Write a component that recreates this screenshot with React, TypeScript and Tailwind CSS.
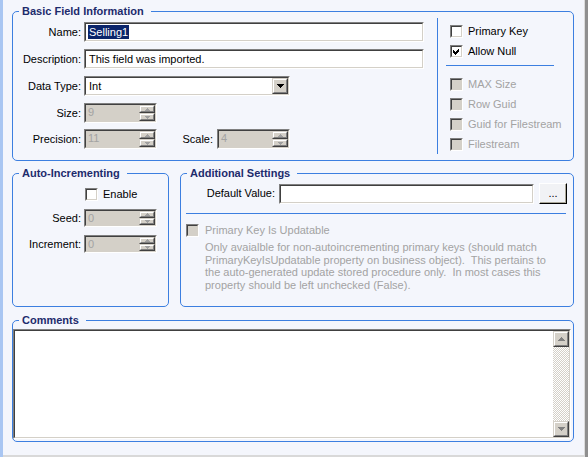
import React from "react";

const blue = "border-[#3c7fe0]";

function Group({
  title,
  className = "",
  children,
}: {
  title: string;
  className?: string;
  children: React.ReactNode;
}) {
  return (
    <fieldset className={`rounded-[5px] border ${blue} ${className}`}>
      <legend className="ml-[6px] pl-[3px] pr-[7px] font-bold leading-[13px] text-[#1d2b6c]">
        {title}
      </legend>
      {children}
    </fieldset>
  );
}

// classic 3D sunken frame: two nested 1px borders
function Sunken({
  className = "",
  fill = "bg-white",
  children,
}: {
  className?: string;
  fill?: string;
  children?: React.ReactNode;
}) {
  return (
    <div
      className={`border border-t-[#808080] border-l-[#808080] border-b-white border-r-white ${className}`}
    >
      <div
        className={`flex h-full w-full border border-t-[#404040] border-l-[#404040] border-b-[#d4d0c8] border-r-[#d4d0c8] ${fill}`}
      >
        {children}
      </div>
    </div>
  );
}

function Raised({ className = "", children }: { className?: string; children?: React.ReactNode }) {
  return (
    <div
      className={`border border-t-[#d4d0c8] border-l-[#d4d0c8] border-b-[#404040] border-r-[#404040] ${className}`}
    >
      <div className="flex h-full w-full items-center justify-center border border-t-white border-l-white border-b-[#808080] border-r-[#808080] bg-[#d4d0c8]">
        {children}
      </div>
    </div>
  );
}

function Arrow({ up = false, color = "#808080", w = 5 }: { up?: boolean; color?: string; w?: number }) {
  const h = Math.ceil(w / 2);
  const pts = up ? `0,${h} ${w},${h} ${w / 2},0` : `0,0 ${w},0 ${w / 2},${h}`;
  return (
    <svg width={w} height={h} viewBox={`0 0 ${w} ${h}`} shapeRendering="crispEdges">
      <polygon points={pts} fill={color} />
    </svg>
  );
}

function Spin({ value, className = "h-[20px]" }: { value: string; className?: string }) {
  return (
    <Sunken className={`w-[73px] ${className}`} fill="bg-[#d4d0c8]">
      <div className="flex-1 pl-[2px] leading-[14px] text-[#a3a3a3]">{value}</div>
      <div className="flex w-[16px] flex-col">
        <Raised className="flex-1">
          <Arrow up color="#a0a0a0" />
        </Raised>
        <Raised className="flex-1">
          <Arrow color="#a0a0a0" />
        </Raised>
      </div>
    </Sunken>
  );
}

function Check({
  checked = false,
  disabled = false,
  label,
  className = "",
}: {
  checked?: boolean;
  disabled?: boolean;
  label: string;
  className?: string;
}) {
  return (
    <div className={`flex h-[13px] items-center gap-[5px] ${className}`}>
      <Sunken className="h-[13px] w-[13px] shrink-0" fill={disabled ? "bg-[#d4d0c8]" : "bg-white"}>
        {checked && (
          <svg width="9" height="9" viewBox="0 0 9 9" shapeRendering="crispEdges">
            <polygon points="1,3 3,5 7,1 7,4 3,8 1,6" fill="#000" />
          </svg>
        )}
      </Sunken>
      <span className={`whitespace-nowrap leading-[13px] ${disabled ? "text-[#a3a3a3]" : "text-black"}`}>
        {label}
      </span>
    </div>
  );
}

function Label({ children, className = "w-[68px]" }: { children: React.ReactNode; className?: string }) {
  return <span className={`shrink-0 text-right leading-[13px] ${className}`}>{children}</span>;
}

export default function App() {
  return (
    <div className="flex h-[457px] w-[588px] overflow-hidden bg-[#f4f6fc] font-['Liberation_Sans',Arial,sans-serif] text-[11px] text-black">
      <div className="w-[3px] shrink-0 bg-[#a9c6f2]" />

      <div className="flex flex-1 flex-col">
        <div className="flex h-[455px] flex-col pl-[9px] pr-[10px] pt-[5px]">
          <Group title="Basic Field Information" className="h-[156px]">
            <div className="flex">
              <div className="flex w-[424px] flex-col pt-[4px]">
                <div className="flex h-[20px] items-center">
                  <Label>Name:</Label>
                  <Sunken className="ml-[3px] h-[20px] w-[340px]">
                    <span className="ml-[2px] mt-[1px] h-[14px] bg-[#0a246a] px-[1px] leading-[14px] text-white">
                      Selling1
                    </span>
                  </Sunken>
                </div>
                <div className="mt-[7px] flex h-[20px] items-center">
                  <Label>Description:</Label>
                  <Sunken className="ml-[3px] h-[20px] w-[340px]">
                    <span className="ml-[3px] mt-[1px] leading-[14px]">This field was imported.</span>
                  </Sunken>
                </div>
                <div className="mt-[7px] flex h-[20px] items-center">
                  <Label>Data Type:</Label>
                  <Sunken className="ml-[3px] h-[20px] w-[206px]">
                    <span className="ml-[3px] mt-[1px] flex-1 leading-[14px]">Int</span>
                    <Raised className="h-[16px] w-[16px]">
                      <Arrow w={7} color="#000" />
                    </Raised>
                  </Sunken>
                </div>
                <div className="mt-[7px] flex h-[20px] items-center">
                  <Label className="w-[68px] text-[#000]">Size:</Label>
                  <div className="ml-[3px]">
                    <Spin value="9" />
                  </div>
                </div>
                <div className="mt-[6px] flex h-[20px] items-center">
                  <Label>Precision:</Label>
                  <div className="ml-[3px]">
                    <Spin value="11" />
                  </div>
                  <Label className="w-[56px]">Scale:</Label>
                  <div className="ml-[4px]">
                    <Spin value="4" />
                  </div>
                </div>
              </div>

              <div className={`flex h-[136px] flex-1 flex-col border-l ${blue} pl-[12px] pt-[7px]`}>
                <Check label="Primary Key" />
                <Check label="Allow Null" checked className="mt-[7px]" />
                <div className="-ml-[4px] mt-[7px] h-px w-[108px] bg-[#3c7fe0]" />
                <Check label="MAX Size" disabled className="mt-[12px]" />
                <Check label="Row Guid" disabled className="mt-[7px]" />
                <Check label="Guid for Filestream" disabled className="mt-[7px]" />
                <Check label="Filestream" disabled className="mt-[7px]" />
              </div>
            </div>
          </Group>

          <div className="mt-[6px] flex h-[140px] gap-[11px]">
            <Group title="Auto-Incrementing" className="h-[140px] w-[157px]">
              <div className="flex flex-col pt-[8px]">
                <Check label="Enable" className="ml-[72px] gap-[4px]" />
                <div className="mt-[8px] flex h-[18px] items-center">
                  <Label>Seed:</Label>
                  <div className="ml-[3px]">
                    <Spin value="0" className="h-[18px]" />
                  </div>
                </div>
                <div className="mt-[8px] flex h-[18px] items-center">
                  <Label>Increment:</Label>
                  <div className="ml-[3px]">
                    <Spin value="0" className="h-[18px]" />
                  </div>
                </div>
              </div>
            </Group>

            <Group title="Additional Settings" className="h-[140px] flex-1">
              <div className="flex flex-col pt-[3px]">
                <div className="flex h-[21px] items-center">
                  <Label className="w-[94px]">Default Value:</Label>
                  <Sunken className="ml-[4px] h-[20px] w-[255px]" />
                  <button className="ml-[5px] flex h-[21px] w-[28px] items-center justify-center border border-t-white border-l-white border-b-black border-r-black bg-[#f1f2f5] shadow-[inset_-1px_-1px_0_#aca899] leading-[13px]">
                    ...
                  </button>
                </div>
                <div className="ml-[5px] mt-[9px] h-px w-[380px] bg-[#3c7fe0]" />
                <Check
                  label="Primary Key Is Updatable"
                  disabled
                  className="ml-[5px] mt-[10px] gap-[6px]"
                />
                <p className="ml-[24px] mt-[4px] whitespace-pre leading-[12.6px] text-[#a3a3a3]">
                  {"Only avaialble for non-autoincrementing primary keys (should match\n" +
                    "PrimaryKeyIsUpdatable property on business object).  This pertains to\n" +
                    "the auto-generated update stored procedure only.  In most cases this\n" +
                    "property should be left unchecked (False)."}
                </p>
              </div>
            </Group>
          </div>

          <Group title="Comments" className="mt-[7px] h-[128px]">
            <div className="pr-[2px] pt-[2px]">
              <Sunken className="h-[110px] w-[558px]">
                <div className="flex-1" />
                <div className="flex w-[16px] flex-col bg-[repeating-conic-gradient(#d4d0c8_0_25%,#ffffff_0_50%)] bg-[length:2px_2px]">
                  <Raised className="h-[16px] w-[16px]">
                    <Arrow up w={7} />
                  </Raised>
                  <div className="flex-1" />
                  <Raised className="h-[16px] w-[16px]">
                    <Arrow w={7} />
                  </Raised>
                </div>
              </Sunken>
            </div>
          </Group>
        </div>
        <div className="h-[2px] bg-[#d9d9d9]" />
      </div>

      <div className="w-px shrink-0 bg-[#dcdcdc]" />
      <div className="w-[3px] shrink-0 bg-[#8f8f8f]" />
    </div>
  );
}
